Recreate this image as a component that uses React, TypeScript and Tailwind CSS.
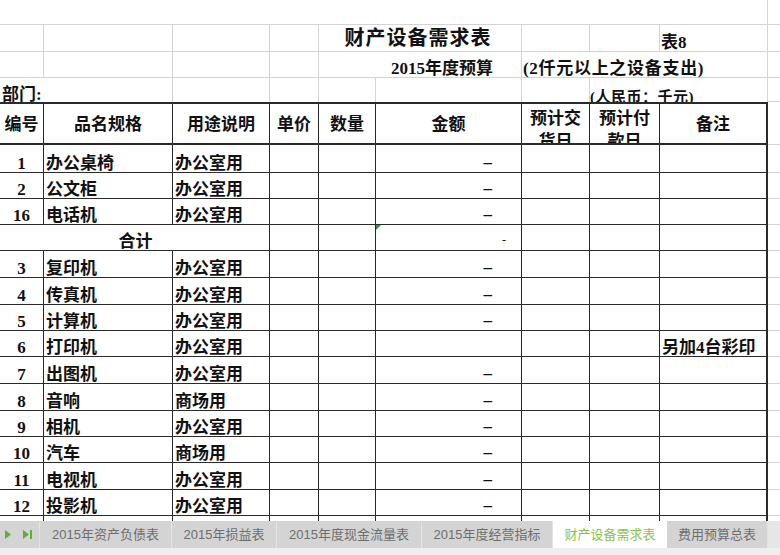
import { ReactNode } from "react";

// column widths of the sheet (incl. the 1px right gridline)
const W = ["w-[44px]", "w-[129px]", "w-[97px]", "w-[49px]", "w-[57px]", "w-[146px]", "w-[68px]", "w-[70px]", "w-[108px]"];

type Item = {
  no?: string;
  name?: string;
  use?: string;
  dash?: boolean;
  note?: string;
  total?: boolean;
  h: string;
};

const items: Item[] = [
  { no: "1", name: "办公桌椅", use: "办公室用", dash: true, h: "h-[28px]" },
  { no: "2", name: "公文柜", use: "办公室用", dash: true, h: "h-[26px]" },
  { no: "16", name: "电话机", use: "办公室用", dash: true, h: "h-[26px]" },
  { total: true, h: "h-[26px]" },
  { no: "3", name: "复印机", use: "办公室用", dash: true, h: "h-[27px]" },
  { no: "4", name: "传真机", use: "办公室用", dash: true, h: "h-[27px]" },
  { no: "5", name: "计算机", use: "办公室用", dash: true, h: "h-[26px]" },
  { no: "6", name: "打印机", use: "办公室用", note: "另加4台彩印", h: "h-[26px]" },
  { no: "7", name: "出图机", use: "办公室用", dash: true, h: "h-[27px]" },
  { no: "8", name: "音响", use: "商场用", dash: true, h: "h-[27px]" },
  { no: "9", name: "相机", use: "办公室用", dash: true, h: "h-[26px]" },
  { no: "10", name: "汽车", use: "商场用", dash: true, h: "h-[26px]" },
  { no: "11", name: "电视机", use: "办公室用", dash: true, h: "h-[27px]" },
  { no: "12", name: "投影机", use: "办公室用", dash: true, h: "h-[26px]" },
];

const tabs = [
  { label: "2015年资产负债表", w: "w-[132px]" },
  { label: "2015年损益表", w: "w-[105px]" },
  { label: "2015年度现金流量表", w: "w-[145px]" },
  { label: "2015年度经营指标", w: "w-[131px]" },
  { label: "财产设备需求表", w: "w-[114px]", active: true },
  { label: "费用预算总表", w: "w-[101px]" },
];

const light = "shrink-0 border-r border-b border-[#d4d4d4]";
const dark = "shrink-0 border-r border-b border-[#2a2a2a] overflow-hidden";

function Txt({ children, className = "" }: { children: ReactNode; className?: string }) {
  return <div className={`flex h-full items-end leading-[16px] ${className}`}>{children}</div>;
}

const App = () => {
  return (
    <div className="w-[780px] h-[555px] overflow-hidden bg-white flex flex-col text-[17px] font-bold text-[#111] [font-family:'Liberation_Serif','Noto_Sans_CJK_SC',serif]">
      {/*top blank row*/}
      <div className="flex h-[25px]">
        <div className="w-[768px] shrink-0 border-r border-b border-[#d4d4d4]" />
        <div className="flex-1 border-b border-[#d4d4d4]" />
      </div>

      {/*title row*/}
      <div className="flex h-[27px]">
        <div className={`${light} ${W[0]}`} />
        <div className={`${light} ${W[1]}`} />
        <div className={`${light} ${W[2]}`} />
        <div className={`${light} ${W[3]}`} />
        <div className={`${light} w-[203px] flex items-end justify-center pr-[4px] text-[20px] leading-[26px] tracking-[1px]`}>财产设备需求表</div>
        <div className={`${light} ${W[6]}`} />
        <div className={`${light} ${W[7]}`} />
        <div className={`${light} ${W[8]}`}>
          <Txt className="pl-[1px]">表8</Txt>
        </div>
        <div className="flex-1 border-b border-[#d4d4d4]" />
      </div>

      {/*budget row*/}
      <div className="flex h-[26px]">
        <div className={`${light} ${W[0]}`} />
        <div className={`${light} ${W[1]}`} />
        <div className={`${light} ${W[2]}`} />
        <div className={`${light} ${W[3]}`} />
        <div className={`${light} w-[203px]`}>
          <Txt className="justify-end pr-[28px]">2015年度预算</Txt>
        </div>
        <div className={`${light} w-[246px] whitespace-nowrap`}>
          <Txt className="pl-[1px] tracking-[0.7px]">(2仟元以上之设备支出)</Txt>
        </div>
        <div className="flex-1 border-b border-[#d4d4d4]" />
      </div>

      {/*department row*/}
      <div className="flex h-[24px]">
        <div className="shrink-0 border-r border-[#d4d4d4] w-[173px]">
          <Txt className="pl-[2px] translate-y-[1px]">部门:</Txt>
        </div>
        <div className={`shrink-0 border-r border-[#d4d4d4] ${W[2]}`} />
        <div className={`shrink-0 border-r border-[#d4d4d4] ${W[3]}`} />
        <div className={`shrink-0 border-r border-[#d4d4d4] ${W[4]}`} />
        <div className={`shrink-0 border-r border-[#d4d4d4] ${W[5]}`} />
        <div className={`shrink-0 border-r border-[#d4d4d4] ${W[6]}`} />
        <div className="shrink-0 border-r border-[#d4d4d4] w-[178px] overflow-hidden whitespace-nowrap">
          <div className="flex h-full items-end text-[15px] leading-[16px] tracking-[0.5px] translate-y-[3px]">(人民币：千元)</div>
        </div>
        <div className="flex-1 border-b border-[#d4d4d4]" />
      </div>

      {/*table header*/}
      <div className="flex h-[43px]">
        {[
          ["编号", W[0]],
          ["品名规格", W[1]],
          ["用途说明", W[2]],
          ["单价", W[3]],
          ["数量", W[4]],
          ["金额", W[5]],
        ].map(([t, w]) => (
          <div key={t} className={`shrink-0 border-y-2 border-r border-[#2a2a2a] flex items-center justify-center pt-[2px] ${w}`}>
            {t}
          </div>
        ))}
        <div className={`shrink-0 border-y-2 border-r border-[#2a2a2a] overflow-hidden text-center leading-[23px] pt-[3px] ${W[6]}`}>
          预计交
          <br />
          货日
        </div>
        <div className={`shrink-0 border-y-2 border-r border-[#2a2a2a] overflow-hidden text-center leading-[23px] pt-[3px] ${W[7]}`}>
          预计付
          <br />
          款日
        </div>
        <div className={`shrink-0 border-y-2 border-r-2 border-[#2a2a2a] flex items-center justify-center pt-[2px] ${W[8]}`}>备注</div>
        <div className="flex-1 border-b border-[#d4d4d4]" />
      </div>

      {/*rows*/}
      {items.map((it, i) => (
        <div key={i} className={`flex ${it.h}`}>
          {it.total ? (
            <div className={`${dark} w-[270px]`}>
              <Txt className="justify-center pl-[2px]">合计</Txt>
            </div>
          ) : (
            <>
              <div className={`${dark} ${W[0]}`}>
                <Txt className="justify-center">{it.no}</Txt>
              </div>
              <div className={`${dark} ${W[1]}`}>
                <Txt className="pl-[2px]">{it.name}</Txt>
              </div>
              <div className={`${dark} ${W[2]}`}>
                <Txt className="pl-[2px]">{it.use}</Txt>
              </div>
            </>
          )}
          <div className={`${dark} ${W[3]}`} />
          <div className={`${dark} ${W[4]}`} />
          <div className={`${dark} relative ${W[5]}`}>
            {it.total && (
              <div className="absolute left-0 top-0 w-0 h-0 border-t-[5px] border-r-[5px] border-t-[#2f9a3a] border-r-transparent" />
            )}
            {it.dash && <Txt className="justify-end pr-[29px] pb-[1px]">–</Txt>}
            {it.total && <Txt className="justify-end pr-[15px] text-[12px] font-normal pb-[2px]">-</Txt>}
          </div>
          <div className={`${dark} ${W[6]}`} />
          <div className={`${dark} ${W[7]}`} />
          <div className={`shrink-0 border-r-2 border-b border-[#2a2a2a] overflow-hidden ${W[8]}`}>
            {it.note && <Txt className="pl-[2px] whitespace-nowrap">{it.note}</Txt>}
          </div>
          <div className="flex-1 border-b border-[#d4d4d4]" />
        </div>
      ))}

      {/*cut-off row*/}
      <div className="flex flex-1">
        {W.slice(0, 8).map((w, i) => (
          <div key={i} className={`shrink-0 border-r border-[#2a2a2a] ${w}`} />
        ))}
        <div className={`shrink-0 border-r-2 border-[#2a2a2a] ${W[8]}`} />
        <div className="flex-1" />
      </div>

      {/*sheet tabs*/}
      <div className="flex h-[27px] shrink-0 bg-[#e6e6e6] text-[13px] font-normal [font-family:'Liberation_Sans','Noto_Sans_CJK_SC',sans-serif]">
        <div className="w-[40px] shrink-0 bg-[#d4d4d4] border-r border-[#e4e4e4] flex items-center gap-[12px] pl-[5px]">
          <svg width="6" height="9" viewBox="0 0 6 9">
            <path d="M0 0 L6 4.5 L0 9 Z" fill="#5fae3c" />
          </svg>
          <svg width="9" height="9" viewBox="0 0 9 9">
            <path d="M0 0 L6 4.5 L0 9 Z" fill="#5fae3c" />
            <rect x="7" y="0" width="2" height="9" fill="#5fae3c" />
          </svg>
        </div>
        {tabs.map((t) => (
          <div
            key={t.label}
            className={`${t.w} shrink-0 flex items-center justify-center whitespace-nowrap ${
              t.active ? "bg-white text-[#8cc152]" : "bg-[#d4d4d4] text-[#6e6e6e] border-r border-[#e4e4e4]"
            }`}
          >
            {t.label}
          </div>
        ))}
        <div className="flex-1" />
      </div>
      <div className="h-[7px] shrink-0 bg-[#eeeeee]" />
    </div>
  );
};

export default App;
